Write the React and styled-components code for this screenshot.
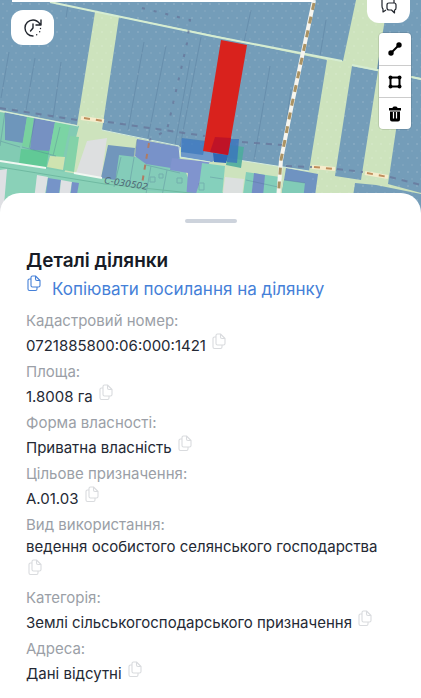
import React from "react";
import styled, { createGlobalStyle } from "styled-components";

const GlobalStyle = createGlobalStyle`
  * {
    box-sizing: border-box;
  }

  body {
    margin: 0;
    background: #fff;
    color: #242934;
    font-family: Inter, "Noto Sans", sans-serif;
  }

  button {
    padding: 0;
    border: none;
    background: none;
    color: inherit;
    font: inherit;
    cursor: pointer;
  }
`;

const details = [
  { label: "Кадастровий номер:", value: "0721885800:06:000:1421" },
  { label: "Площа:", value: "1.8008 га" },
  { label: "Форма власності:", value: "Приватна власність" },
  { label: "Цільове призначення:", value: "А.01.03" },
  { label: "Вид використання:", value: "ведення особистого селянського господарства" },
  { label: "Категорія:", value: "Землі сільськогосподарського призначення" },
  { label: "Адреса:", value: "Дані відсутні" },
];

// [points, fill]
const parcels = [
  // fields
  ["0,0 315,0 303,54 212,35 50,2 0,2", "#749db9"],
  ["315,0 356,0 343,61 303,54", "#749db9"],
  ["0,0 50,2 95,12 77,125 0,110", "#749db9"],
  ["119,17 327,60 309,171 225,158 180,147 102,130", "#749db9"],
  ["388,0 421,0 421,78 377,69", "#749db9"],
  ["352,66 378,71 361,180 335,176", "#749db9"],
  ["404,76 421,80 421,193 388,184", "#749db9"],
  ["355,183 376,185 421,194 421,217 350,217", "#749db9"],
  // village, left of the grassy strip
  ["0,112 79,126 70,160 64,173 0,162", "#82cbb3"],
  ["5,112 27,117 23,143 5,140", "#6e96bb"],
  ["27,117 34,118 31,148 22,146", "#79d19f"],
  ["34,118 55,122 49,154 30,149", "#7691c2"],
  ["55,122 70,125 63,158 49,154", "#7bd4a4"],
  ["21,149 49,151 46,169 19,164", "#61c996"],
  ["50,156 65,157 63,170 47,167", "#cfe3b0"],
  ["70,136 79,137 74,172 64,170", "#83d2a8"],
  // road side
  ["0,161 102,178 150,170 224,193 224,217 0,217", "#8ad1b8"],
  ["0,170 7,169 3,217 0,217", "#dfe0e4"],
  ["37,175 48,177 44,200 34,200", "#dfe2e3"],
  ["48,178 61,180 58,200 45,200", "#7694c8"],
  ["61,180 72,182 69,200 59,200", "#dfe1e4"],
  ["72,182 79,183 76,200 70,200", "#7690c8"],
  // village, centre
  ["87,141 107,138 101,178 76,173", "#dddfe0"],
  ["108,145 135,148 130,182 101,178", "#7196bc"],
  ["119,155 136,157 180,158 195,195 140,190 115,183", "#84ccb9"],
  ["137,139 180,147 180,157 171,168 146,164 135,156", "#7892c9"],
  ["181,139 202,142 226,153 212,162 181,157", "#6d98ca"],
  ["172,158 210,162 203,172 194,200 186,200 188,173 170,170", "#8094ce"],
  ["202,163 225,166 220,217 195,217", "#85d0bc"],
  ["225,177 244,179 240,217 220,217", "#dce0df"],
  ["246,172 280,177 275,217 240,217", "#83ceb9"],
  ["254,173 265,175 261,217 249,217", "#748ec5"],
  ["286,168 318,174 312,217 278,217", "#6f93c1"],
  ["284,180 305,183 301,217 278,217", "#81cbb7"],
];

const CityMap = () => (
  <MapDrawing viewBox="0 0 421 217" preserveAspectRatio="xMidYMin slice" aria-hidden="true">
    <defs>
      <pattern id="grass" width="9" height="14" patternUnits="userSpaceOnUse">
        <circle cx="3" cy="4" r="1" fill="#fff" opacity="0.35" />
        <circle cx="7" cy="11" r="1" fill="#fff" opacity="0.2" />
      </pattern>
    </defs>
    <rect width="421" height="217" fill="#cde3bd" />
    {parcels.map(([points, fill], i) => (
      <polygon key={i} points={points} fill={fill} />
    ))}
    <polygon points="0,0 421,0 421,217 310,217 310,170 0,110" fill="url(#grass)" opacity="0.4" />
    <g fill="none" stroke="#4c6f92" strokeWidth="1" opacity="0.3">
      <path d="M68 5 66 18M35 58 26 110M9 52 1 98M61 62 53 118M144 42 128 130M166 46 148 138M190 60 175 145M270 66 254 160M291 90 280 166M251 10 244 42M201 37 180 147M326 20 320 56" />
      <path d="M0 141l20 6M22 147l34 9M35 119l-6 30M60 127l-7 29M137 140l-8 47M146 165l34 8M151 166l-5 28M167 170l-5 26M121 157l-7 30M5 112l-5 34M210 177l13 2M246 180l32 7M284 180l21 3" />
      <path d="M150 177h5v5h-5zM159 174h4v4h-4zM177 178h5v5h-5zM199 183h5v7h-5z" />
    </g>
    <path d="M50 2 212 36 342 61M352 65 421 79" stroke="#d6edd2" strokeWidth="2" fill="none" />
    <path d="M0 111 78 126M102 130 179 146 180 157 210 162M225 158 309 171" stroke="#d5ecdc" strokeWidth="1" fill="none" />
    <path d="M0 161 46 168M74 173 102 178" stroke="#f1f8f2" strokeWidth="2" fill="none" />
    <path d="M0 167 105 184 200 194" stroke="#6fb9a1" strokeWidth="1" fill="none" />
    <g fill="none" stroke="#68789c" strokeWidth="2" opacity="0.8">
      <path d="M0 108 77 120M108 122 205 136M242 142 282 145M286 166 312 167M337 169 363 172M390 177 421 185" strokeDasharray="6 6" />
      <path d="M142 8 190 20 187 43 173 104 167 130 149 140" strokeDasharray="3 9" />
    </g>
    <path d="M149 143 142 184" stroke="#b07c65" strokeWidth="2" strokeDasharray="5 6" />
    <path d="M81 118 104 121M312 167 335 169M365 173 388 177" stroke="#f5eccb" strokeWidth="4" />
    <path d="M84 118 104 121M314 167 335 169M367 173 388 177" stroke="#c08e5c" strokeWidth="2" strokeDasharray="6 6" />
    <path d="M314 0 292 104 281 160 278 200" stroke="#f6f5ef" strokeWidth="4" fill="none" />
    <path d="M314 3 292 104 281 160 278 200" stroke="#aa9365" strokeWidth="3" strokeDasharray="7 7" fill="none" />
    <polygon points="182,138 206,141 203,155 181,152" fill="#3f7abd" opacity="0.8" />
    <polygon points="213,153 229,155 226,163 214,162" fill="#2f68b5" />
    <polygon points="230,145 244,147 241,168 226,165" fill="#4eac9d" opacity="0.9" />
    <polygon points="229,139 239,139 237,163 227,162" fill="#3a74bd" opacity="0.8" />
    <polygon points="221,40 247,45 228,155 203,151" fill="#d9221d" />
    <polygon points="215,137 231,138 228,155 210,152" fill="#b8102b" opacity="0.8" />
    <text x="104" y="183" transform="rotate(9 104 183)" fontSize="9" fill="#4f6874" fontFamily="DejaVu Sans" fontStyle="italic">
      С-030502
    </text>
  </MapDrawing>
);

const CopyIcon = () => (
  <svg width="15" height="17" viewBox="0 0 15 17" fill="none" stroke="currentColor" strokeWidth="1.1" strokeLinejoin="round">
    <path d="M9.5 1H6.5Q5 1 5 2.5V10.5Q5 12 6.5 12H12.5Q14 12 14 10.5V5.5zV4Q9.5 5.5 11 5.5H14" />
    <path d="M5 4H3.5Q2 4 2 5.5V14Q2 15.5 3.5 15.5H9.5Q11 15.5 11 14V12" />
  </svg>
);

const HistoryIcon = () => (
  <svg width="20" height="20" viewBox="0 0 20 20" fill="none" stroke="#20242c" strokeWidth="1.4" strokeLinecap="round" strokeLinejoin="round">
    <path d="M10 18A8 8 0 0 1 10 2Q14 2 17 6M18 2V7H13M10 6V10L7.5 13" />
    <path d="M17.5 10.5v.1M16.7 13.7v.1M13.7 16.7v.1" />
  </svg>
);

const ChatIcon = () => (
  <svg width="18" height="18" viewBox="0 0 18 18" fill="none" stroke="#20242c" strokeWidth="1.2" strokeLinejoin="round">
    <path d="M14 6V3Q14 1 12 1H4Q2 1 2 3V9Q2 11 3 12V15L6 13" />
    <path d="M9 6H14Q16 6 16 8V11Q16 13 14.5 13V16L11.5 13H9Q7 13 7 11V8Q7 6 9 6Z" />
  </svg>
);

const LineIcon = () => (
  <svg width="14" height="14" viewBox="0 0 14 14" fill="#000">
    <path d="M3 11 11 3" stroke="#000" strokeWidth="2" />
    <circle cx="3" cy="11" r="2.7" />
    <circle cx="11" cy="3" r="2.7" />
  </svg>
);

const PolygonIcon = () => (
  <svg width="14" height="14" viewBox="0 0 14 14">
    <path d="M2.5 2.5h9v9h-9z" fill="none" stroke="#000" strokeWidth="2" />
    <circle cx="2.5" cy="2.5" r="2" />
    <circle cx="11.5" cy="2.5" r="2" />
    <circle cx="2.5" cy="11.5" r="2" />
    <circle cx="11.5" cy="11.5" r="2" />
  </svg>
);

const TrashIcon = () => (
  <svg width="14" height="16" viewBox="0 0 14 16">
    <path d="M4.5 2Q4.5 .5 6 .5H8Q9.5 .5 9.5 2H13V4.5H1V2zM2 5.5H12V13.5Q12 15.5 10 15.5H4Q2 15.5 2 13.5z" />
    <path d="M5.5 6V12.5M8.5 6V12.5" stroke="#fff" strokeWidth="1.2" />
  </svg>
);

const App = () => {
  const copy = (text) => navigator.clipboard?.writeText(text);

  return (
    <>
      <GlobalStyle />
      <MapArea>
        <CityMap />
        <TopEdge />
        <HistoryButton aria-label="Історія">
          <HistoryIcon />
        </HistoryButton>
        <ChatButton aria-label="Чат">
          <ChatIcon />
        </ChatButton>
        <DrawTools>
          <ToolButton aria-label="Лінія">
            <LineIcon />
          </ToolButton>
          <ToolButton aria-label="Полігон">
            <PolygonIcon />
          </ToolButton>
          <ToolButton aria-label="Видалити">
            <TrashIcon />
          </ToolButton>
        </DrawTools>
      </MapArea>
      <Sheet>
        <Handle />
        <Title>Деталі ділянки</Title>
        <ShareButton onClick={() => copy(window.location.href)}>
          <CopyIcon />
          Копіювати посилання на ділянку
        </ShareButton>
        <Details>
          {details.map(({ label, value }) => (
            <Detail key={label}>
              <Label>{label}</Label>
              <Value>
                {value}{" "}
                <CopyButton aria-label={`Копіювати ${label}`} onClick={() => copy(value)}>
                  <CopyIcon />
                </CopyButton>
              </Value>
            </Detail>
          ))}
        </Details>
      </Sheet>
    </>
  );
};

export default App;

const MapArea = styled.div`
  position: relative;
  height: 217px;
  overflow: hidden;
`;

const MapDrawing = styled.svg`
  display: block;
  width: 100%;
  height: 100%;
`;

const TopEdge = styled.div`
  position: absolute;
  top: 0;
  left: 12px;
  right: 108px;
  height: 2px;
  background: #fff;
`;

const FloatingButton = styled.button`
  position: absolute;
  display: flex;
  align-items: center;
  justify-content: center;
  width: 43px;
  height: 35px;
  background: #fff;
  border-radius: 12px;
`;

const HistoryButton = styled(FloatingButton)`
  top: 10px;
  left: 11px;
`;

const ChatButton = styled(FloatingButton)`
  top: -12px;
  right: 11px;
`;

const DrawTools = styled.div`
  position: absolute;
  top: 33px;
  right: 10px;
  width: 32px;
  overflow: hidden;
  background: #fff;
  border-radius: 4px;
  box-shadow: 0 0 0 1px rgba(0, 0, 0, 0.1);
`;

const ToolButton = styled.button`
  display: flex;
  align-items: center;
  justify-content: center;
  width: 100%;
  height: 32px;

  & + & {
    border-top: 1px solid #ccc;
  }
`;

const Sheet = styled.main`
  position: relative;
  margin-top: -24px;
  padding: 26px 26px 16px;
  background: #fff;
  border-radius: 20px 20px 0 0;
`;

const Handle = styled.div`
  width: 52px;
  height: 4px;
  margin: 0 auto 24px;
  background: #cdd3dc;
  border-radius: 2px;
`;

const Title = styled.h1`
  margin: 0;
  color: #171b26;
  font-size: 19px;
  font-weight: 600;
  line-height: 28px;
`;

const ShareButton = styled.button`
  display: flex;
  gap: 11px;
  color: #4580d8;
  font-size: 17px;
  line-height: 28px;
`;

const Details = styled.dl`
  margin: 7px 0 0;
`;

const Detail = styled.div`
  font-size: 15px;
  line-height: 22px;
`;

const Label = styled.dt`
  color: #9b9fa7;
`;

const Value = styled.dd`
  margin: 0 0 4px;
`;

const CopyButton = styled.button`
  display: inline-block;
  height: 19px;
  margin-left: 1px;
  color: #d9dbde;

  svg {
    display: block;
  }
`;
